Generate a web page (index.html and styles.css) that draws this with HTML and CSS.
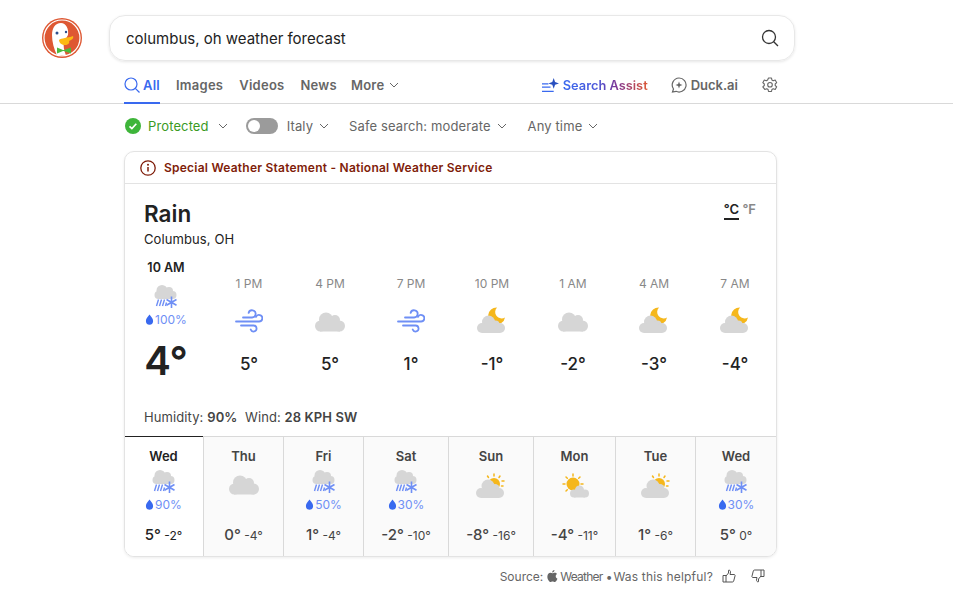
FILE: index.html
```html
<!DOCTYPE html>
<html lang="en">
<head>
    <meta charset="UTF-8">
    <meta name="viewport" content="width=device-width, initial-scale=1.0">
    <title>columbus, oh weather forecast at DuckDuckGo</title>
    <link rel="stylesheet" href="styles.css">
</head>
<body>
    <svg class="defs" width="0" height="0">
        <symbol id="cloud" viewBox="0 0 30 20">
            <g fill="#d6d6d6">
                <circle cx="11" cy="7.5" r="7"/>
                <circle cx="20" cy="8" r="5"/>
                <circle cx="5.5" cy="14" r="5.5"/>
                <circle cx="24.5" cy="14" r="5.5"/>
                <rect x="5" y="10" width="20" height="9.5"/>
            </g>
        </symbol>
        <symbol id="snow" viewBox="0 0 24 24">
            <g fill="#d6d6d6">
                <circle cx="8" cy="5.5" r="5.5"/>
                <circle cx="15" cy="6" r="4"/>
                <circle cx="4.5" cy="10" r="4"/>
                <circle cx="18.5" cy="10" r="4"/>
                <rect x="4" y="7" width="15" height="7"/>
            </g>
            <g stroke="#6f8ff5" stroke-width="1.4" fill="none">
                <path d="M2.500 21l2-6.500M5.500 21l2-6.500M8.500 21l2-6.500M11.500 21l1-3.500"/>
                <path d="M17.500 11.500v11.500M12.500 14.500l10 5.700M12.500 20.200l10-5.700" stroke-width="1.600"/>
            </g>
        </symbol>
        <symbol id="wind" viewBox="0 0 28 24">
            <g stroke="#6f8ff5" stroke-width="1.800" fill="none" stroke-linecap="round">
                <path d="M8 8.500h9a3.600 3.600 0 1 0-3.400-4.600"/>
                <path d="M1 12.500h23a3.300 3.300 0 1 0-3-4.600"/>
                <path d="M6 16.500h12.500a3 3 0 1 1-2.800 4"/>
            </g>
        </symbol>
        <symbol id="moon" viewBox="0 0 30 27">
            <path d="M20 0.500A8.500 8.500 0 1 0 28 10.500A6.450 6.450 0 0 1 20 0.500z" fill="#f5b71c"/>
            <g fill="#d6d6d6">
                <circle cx="11.500" cy="15" r="6.500"/>
                <circle cx="18.500" cy="17.500" r="4"/>
                <circle cx="5" cy="21" r="5"/>
                <circle cx="23" cy="21" r="5"/>
                <rect x="5" y="18" width="18" height="8"/>
            </g>
        </symbol>
        <symbol id="partly" viewBox="0 0 30 26">
            <g stroke="#f5b71c" stroke-width="1.500" stroke-linecap="round">
                <path d="M18 1v2M24 3l-1 1.500M11.500 3l1 1.500M28 8h-2M27 13h-1.500"/>
            </g>
            <circle cx="18" cy="11" r="6" fill="#f5b71c"/>
            <g fill="#d6d6d6">
                <circle cx="12" cy="13" r="6.500"/>
                <circle cx="19" cy="15.500" r="4.500"/>
                <circle cx="5" cy="20" r="5"/>
                <circle cx="23" cy="20" r="5"/>
                <rect x="5" y="16" width="18" height="9"/>
            </g>
        </symbol>
        <symbol id="sunny" viewBox="0 0 28 26">
            <g stroke="#f5b71c" stroke-width="1.500" stroke-linecap="round">
                <path d="M12 1v2M12 19v2M2 11h2M20 11h2M5 4l1.300 1.300M19 4l-1.300 1.300M5 18l1.300-1.300"/>
            </g>
            <circle cx="12" cy="11" r="6.500" fill="#f5b71c"/>
            <g fill="#d6d6d6">
                <circle cx="18.500" cy="17" r="4.500"/>
                <circle cx="13" cy="20.500" r="4"/>
                <circle cx="24" cy="20.500" r="4"/>
                <rect x="13" y="20" width="11" height="4.500"/>
            </g>
        </symbol>
        <symbol id="drop" viewBox="0 0 10 12">
            <path d="M5 0c2 2.800 4 4.700 4 7.200a4 4 0 0 1-8 0C1 4.700 3 2.800 5 0z" fill="#3969ef"/>
        </symbol>
        <symbol id="chev" viewBox="0 0 10 6">
            <path d="M1 1l4 4 4-4" fill="none" stroke="currentColor" stroke-width="1"/>
        </symbol>
    </svg>

    <header>
        <div class="top-row">
            <svg class="logo" viewBox="0 0 40 40" width="40" height="40">
                <circle cx="20" cy="20" r="20" fill="#de5833"/>
                <circle cx="20" cy="20" r="18" fill="none" stroke="#fff" stroke-width="1.200"/>
                <path d="M19 5C13 5 10 10 10 17C10 24 12 31 15 37.500L24 37.500C22 32 21 28 22 24L26 17C27 11 24 5 19 5z" fill="#fff"/>
                <circle cx="15" cy="15" r="1.500" fill="#2d4f8e"/>
                <circle cx="24" cy="14" r="1.200" fill="#2d4f8e"/>
                <path d="M17 22c2-2 9-2 14-4 1 2-1 4-4 5 1 2-1 4-4 4-3 0-6-2-6-5z" fill="#fdb913"/>
                <path d="M15 29.500l6 2.500h1l7-2.500v6l-7-2.500h-1l-6 2.500z" fill="#4cba3c"/>
            </svg>
            <form class="search-box">
                <span class="search-text">columbus, oh weather forecast</span>
                <svg viewBox="0 0 18 18" width="18" height="18">
                    <circle cx="8" cy="8" r="6.500" fill="none" stroke="#333" stroke-width="1.300"/>
                    <path d="M12.700 12.700L17 17" stroke="#333" stroke-width="1.300"/>
                </svg>
            </form>
        </div>
        <nav>
            <a href="#" class="tab active">
                <svg viewBox="0 0 16 16" width="16" height="16">
                    <circle cx="7" cy="7" r="6" fill="none" stroke="#3969ef" stroke-width="1.200"/>
                    <path d="M11.300 11.300L15.500 15.500" stroke="#3969ef" stroke-width="1.200"/>
                </svg>
                All
            </a>
            <a href="#" class="tab">Images</a>
            <a href="#" class="tab">Videos</a>
            <a href="#" class="tab news">News</a>
            <a href="#" class="tab">More <svg class="chev"><use href="#chev"/></svg></a>
            <div class="nav-right">
                <a href="#" class="assist">
                    <svg viewBox="0 0 16 14" width="17" height="15">
                        <path d="M0 5.500h6M0 8.500h8M0 12.500h11" stroke="#3969ef" stroke-width="1.100"/>
                        <path d="M11 0l1.300 3.700L16 5l-3.700 1.300L11 10 9.700 6.300 6 5l3.700-1.300z" fill="#2950bf"/>
                    </svg>
                    <span class="assist-text">Search Assist</span>
                </a>
                <a href="#" class="duck">
                    <svg viewBox="0 0 16 16" width="16" height="16">
                        <path d="M8 1a7 7 0 1 1-3 13.300L1.500 15l1-3A7 7 0 0 1 8 1z" fill="none" stroke="#666" stroke-width="1.200"/>
                        <path d="M8 4.500l.9 2.600 2.600.9-2.600.9L8 11.500l-.9-2.600L4.500 8l2.600-.9z" fill="#666"/>
                    </svg>
                    Duck.ai
                </a>
                <svg class="gear" viewBox="0 0 16 16" width="16" height="16">
                    <path d="M6.500 1h3l.4 2 1.300.8 2-.7 1.500 2.600-1.500 1.300v1.500l1.500 1.300-1.500 2.600-2-.7-1.300.8-.4 2h-3l-.4-2-1.300-.8-2 .7L.8 9.800l1.500-1.300V7L.8 5.700l1.500-2.600 2 .7 1.300-.8z" fill="none" stroke="#666" stroke-width="1.100" stroke-linejoin="round"/>
                    <circle cx="8" cy="7.750" r="2.300" fill="none" stroke="#666" stroke-width="1.100"/>
                </svg>
            </div>
        </nav>
    </header>

    <div class="filters">
        <div class="filter protected">
            <svg viewBox="0 0 16 16" width="16" height="16">
                <circle cx="8" cy="8" r="8" fill="#3eb53a"/>
                <path d="M4.500 8.300l2.400 2.300 4.400-4.800" fill="none" stroke="#fff" stroke-width="1.700"/>
            </svg>
            Protected <svg class="chev"><use href="#chev"/></svg>
        </div>
        <div class="filter region">
            <span class="toggle"><span class="knob"></span></span>
            Italy <svg class="chev"><use href="#chev"/></svg>
        </div>
        <div class="filter">Safe search: moderate <svg class="chev"><use href="#chev"/></svg></div>
        <div class="filter">Any time <svg class="chev"><use href="#chev"/></svg></div>
    </div>

    <main class="card">
        <div class="alert">
            <svg viewBox="0 0 16 16" width="16" height="16">
                <circle cx="8" cy="8" r="7.200" fill="none" stroke="#7f1d0a" stroke-width="1.300"/>
                <path d="M8 7v4.500" stroke="#7f1d0a" stroke-width="1.500"/>
                <circle cx="8" cy="4.800" r="1" fill="#7f1d0a"/>
            </svg>
            Special Weather Statement - National Weather Service
        </div>

        <section class="current">
            <div class="title-row">
                <div>
                    <h1>Rain</h1>
                    <p class="city">Columbus, OH</p>
                </div>
                <div class="units"><span class="unit-on">°C</span> <span class="unit-off">°F</span></div>
            </div>

            <div class="hours">
                <div class="hour now">
                    <div class="now-time">10 AM</div>
                    <svg class="ic-snow"><use href="#snow"/></svg>
                    <div class="rain-pct"><svg class="drop"><use href="#drop"/></svg>100%</div>
                    <div class="now-temp">4°</div>
                </div>
                <div class="hour">
                    <div class="time">1 PM</div>
                    <div class="ic-wrap"><svg class="ic-wind"><use href="#wind"/></svg></div>
                    <div class="temp">5°</div>
                </div>
                <div class="hour">
                    <div class="time">4 PM</div>
                    <div class="ic-wrap"><svg class="ic-cloud"><use href="#cloud"/></svg></div>
                    <div class="temp">5°</div>
                </div>
                <div class="hour">
                    <div class="time">7 PM</div>
                    <div class="ic-wrap"><svg class="ic-wind"><use href="#wind"/></svg></div>
                    <div class="temp">1°</div>
                </div>
                <div class="hour">
                    <div class="time">10 PM</div>
                    <div class="ic-wrap"><svg class="ic-moon"><use href="#moon"/></svg></div>
                    <div class="temp">-1°</div>
                </div>
                <div class="hour">
                    <div class="time">1 AM</div>
                    <div class="ic-wrap"><svg class="ic-cloud"><use href="#cloud"/></svg></div>
                    <div class="temp">-2°</div>
                </div>
                <div class="hour">
                    <div class="time">4 AM</div>
                    <div class="ic-wrap"><svg class="ic-moon"><use href="#moon"/></svg></div>
                    <div class="temp">-3°</div>
                </div>
                <div class="hour">
                    <div class="time">7 AM</div>
                    <div class="ic-wrap"><svg class="ic-moon"><use href="#moon"/></svg></div>
                    <div class="temp">-4°</div>
                </div>
            </div>

            <p class="details">Humidity: <b>90%</b> &nbsp;Wind: <b>28 KPH SW</b></p>
        </section>

        <section class="days">
            <div class="day active">
                <div class="day-name">Wed</div>
                <svg class="ic-snow"><use href="#snow"/></svg>
                <div class="rain-pct"><svg class="drop"><use href="#drop"/></svg>90%</div>
                <div class="range"><b>5°</b> <span>-2°</span></div>
            </div>
            <div class="day">
                <div class="day-name">Thu</div>
                <svg class="ic-cloud"><use href="#cloud"/></svg>
                <div class="range"><b>0°</b> <span>-4°</span></div>
            </div>
            <div class="day">
                <div class="day-name">Fri</div>
                <svg class="ic-snow"><use href="#snow"/></svg>
                <div class="rain-pct"><svg class="drop"><use href="#drop"/></svg>50%</div>
                <div class="range"><b>1°</b> <span>-4°</span></div>
            </div>
            <div class="day">
                <div class="day-name">Sat</div>
                <svg class="ic-snow"><use href="#snow"/></svg>
                <div class="rain-pct"><svg class="drop"><use href="#drop"/></svg>30%</div>
                <div class="range"><b>-2°</b> <span>-10°</span></div>
            </div>
            <div class="day">
                <div class="day-name">Sun</div>
                <svg class="ic-partly"><use href="#partly"/></svg>
                <div class="range"><b>-8°</b> <span>-16°</span></div>
            </div>
            <div class="day">
                <div class="day-name">Mon</div>
                <svg class="ic-partly"><use href="#sunny"/></svg>
                <div class="range"><b>-4°</b> <span>-11°</span></div>
            </div>
            <div class="day">
                <div class="day-name">Tue</div>
                <svg class="ic-partly"><use href="#partly"/></svg>
                <div class="range"><b>1°</b> <span>-6°</span></div>
            </div>
            <div class="day">
                <div class="day-name">Wed</div>
                <svg class="ic-snow"><use href="#snow"/></svg>
                <div class="rain-pct"><svg class="drop"><use href="#drop"/></svg>30%</div>
                <div class="range"><b>5°</b> <span>0°</span></div>
            </div>
        </section>
    </main>

    <footer class="source">
        <span>Source:</span>
        <svg viewBox="0 0 12 14" width="11" height="12">
            <path d="M8.300 0c.1 1.500-1.200 3-2.700 3C5.400 1.500 6.900.1 8.300 0zM6 3.800c.7 0 1.500-.6 2.700-.6 1 0 2 .5 2.600 1.400-2.300 1.300-1.900 4.600.5 5.500-.6 1.600-2 3.900-3.300 3.900-.9 0-1.300-.6-2.400-.6s-1.600.6-2.400.6C2.200 14 0 10.800 0 7.800 0 5 1.800 3.300 3.600 3.300c1 0 1.800.5 2.400.5z" fill="#666"/>
        </svg>
        <span class="weather-name">Weather</span>
        <span>•</span>
        <span class="helpful">Was this helpful?</span>
        <svg class="thumb" viewBox="0 0 14 14" width="14" height="14">
            <path d="M1 6.500h3v6.500H1zM4 7l2.500-3V1.300c1.300-.5 2 .7 2 1.700L8 5.500h4c1 0 1.300.8 1 1.500l-1.300 5c-.2.700-.7 1-1.300 1H4" fill="none" stroke="#555" stroke-width="1"/>
        </svg>
        <svg class="thumb down" viewBox="0 0 14 14" width="14" height="14">
            <path d="M13 7.500h-3V1h3zM10 7l-2.500 3v2.700c-1.300.5-2-.7-2-1.700L6 8.500H2c-1 0-1.300-.8-1-1.500l1.300-5c.2-.7.7-1 1.300-1H10" fill="none" stroke="#555" stroke-width="1"/>
        </svg>
    </footer>
</body>
</html>
```

FILE: styles.css
```css
body {
    margin: 0;
    font-family: Inter, "Noto Sans", sans-serif;
    background-color: #fff;
    color: #222;
}
.defs {
    position: absolute;
}
svg {
    flex-shrink: 0;
}
header {
    border-bottom: 1px solid #d9d9d9;
    height: 104px;
    box-sizing: border-box;
}
.top-row {
    display: flex;
    align-items: flex-start;
    padding-top: 15px;
    padding-left: 42px;
}
.logo {
    margin-top: 3px;
    margin-right: 27px;
}
.search-box {
    display: flex;
    align-items: center;
    justify-content: space-between;
    width: 686px;
    height: 46px;
    box-sizing: border-box;
    padding: 0 15px 0 16px;
    margin: 0;
    border: 1px solid #e8e8e8;
    border-radius: 16px;
    box-shadow: 0 1px 3px rgba(0, 0, 0, 0.1);
}
.search-text {
    font-size: 15px;
    color: #222;
}
nav {
    display: flex;
    width: 654px;
    height: 43px;
    margin-left: 124px;
    font-size: 13px;
    font-weight: 600;
}
nav a {
    color: #666;
    text-decoration: none;
}
.tab {
    display: flex;
    align-items: center;
    gap: 3px;
    height: 100%;
    margin-right: 16px;
    box-sizing: border-box;
    padding-top: 5px;
    letter-spacing: 0.25px;
}
.tab.news {
    margin-right: 14px;
}
.tab.active {
    color: #3969ef;
    border-bottom: 2px solid #3969ef;
    padding-top: 7px;
}
.chev {
    width: 10px;
    height: 6px;
    margin-left: 2px;
}
.nav-right {
    display: flex;
    align-items: center;
    margin-left: auto;
    padding-top: 5px;
}
.assist {
    display: flex;
    align-items: center;
    gap: 4px;
    margin-right: 23px;
    font-size: 12.8px;
}
.assist-text {
    background: linear-gradient(to right, #3969ef 0%, #4a55d8 40%, #83368f 65%, #de5833 100%);
    -webkit-background-clip: text;
    background-clip: text;
    color: transparent;
}
.duck {
    display: flex;
    align-items: center;
    gap: 4px;
    margin-right: 24px;
}
.filters {
    display: flex;
    align-items: center;
    height: 44px;
    margin-left: 125px;
    font-size: 13px;
    letter-spacing: 0.12px;
    color: #666;
}
.filter {
    display: flex;
    align-items: center;
    gap: 4px;
    margin-right: 21px;
}
.protected {
    color: #3a9a1f;
    gap: 7px;
    margin-right: 18px;
}
.protected .chev {
    color: #666;
}
.region {
    margin-right: 20px;
}
.toggle {
    display: block;
    width: 32px;
    height: 16px;
    border-radius: 8px;
    background-color: #9b9b9b;
    margin-right: 5px;
}
.knob {
    display: block;
    width: 12px;
    height: 12px;
    margin: 2px;
    border-radius: 50%;
    background-color: #fff;
}
.card {
    width: 653px;
    height: 406px;
    box-sizing: border-box;
    margin-left: 124px;
    margin-top: 3px;
    border: 1px solid #e3e3e3;
    border-radius: 10px;
    box-shadow: 0 1px 3px rgba(0, 0, 0, 0.08);
    overflow: hidden;
}
.alert {
    display: flex;
    align-items: center;
    gap: 8px;
    height: 32px;
    box-sizing: border-box;
    padding-left: 15px;
    border-bottom: 1px solid #e3e3e3;
    font-size: 12px;
    letter-spacing: 0.23px;
    font-weight: 600;
    color: #7f1d0a;
}
.current {
    height: 252px;
    padding-left: 19px;
    box-sizing: border-box;
}
.title-row {
    display: flex;
    justify-content: space-between;
    height: 75px;
    padding-top: 16px;
    box-sizing: border-box;
}
h1 {
    margin: 0;
    font-size: 22.5px;
    font-weight: 600;
    line-height: 27px;
    color: #222;
}
.city {
    margin: 3px 0 0;
    font-size: 13px;
    letter-spacing: 0.1px;
    line-height: 18px;
}
.units {
    margin-right: 20px;
    font-size: 13px;
    font-weight: 600;
    height: 20px;
    padding-top: 1px;
}
.unit-on {
    display: inline-block;
    border-bottom: 2px solid #222;
    padding: 0 0 1px;
}
.unit-off {
    color: #888;
}
.hours {
    display: flex;
    height: 150px;
}
.hour {
    display: flex;
    flex-direction: column;
    align-items: center;
    width: 81px;
    padding-top: 17px;
    box-sizing: border-box;
}
.hour.now {
    width: 64px;
    align-items: flex-start;
    padding-top: 1px;
    margin-right: 0.5px;
}
.now-time {
    width: 44px;
    text-align: center;
    font-size: 12.5px;
    font-weight: 600;
    line-height: 16px;
}
.now .ic-snow {
    margin: 9px 0 0 10px;
}
.now .rain-pct {
    width: 44px;
    justify-content: center;
    margin-top: 4px;
}
.now-temp {
    width: 44px;
    text-align: center;
    font-size: 40px;
    font-weight: 600;
    line-height: 48px;
    margin-top: 10px;
}
.time {
    font-size: 12px;
    line-height: 16px;
    color: #888;
}
.ic-wrap {
    display: flex;
    align-items: flex-end;
    justify-content: center;
    height: 35px;
    margin-top: 7px;
}
.ic-wind {
    width: 28px;
    height: 24px;
    margin-bottom: 1px;
}
.ic-cloud {
    width: 30px;
    height: 20px;
    margin-bottom: 2px;
}
.ic-moon {
    width: 30px;
    height: 27px;
}
.ic-snow {
    display: block;
    width: 24px;
    height: 24px;
}
.ic-partly {
    width: 30px;
    height: 26px;
}
.rain-pct {
    display: flex;
    align-items: center;
    font-size: 12px;
    line-height: 14px;
    color: #6f8ff5;
}
.drop {
    width: 9px;
    height: 12px;
    margin-right: 1px;
}
.temp {
    font-size: 17px;
    font-weight: 500;
    line-height: 20px;
    margin-top: 20px;
}
.details {
    margin: 0;
    font-size: 13px;
    letter-spacing: 0.1px;
    line-height: 16px;
    color: #444;
}
.details b {
    font-weight: 600;
}
.days {
    display: grid;
    grid-template-columns: 78px 80px 80px 85px 85px 82px 80px 1fr;
    height: 120px;
    border-top: 1px solid #d9d9d9;
}
.day {
    display: flex;
    flex-direction: column;
    align-items: center;
    padding-top: 11px;
    box-sizing: border-box;
    border-left: 1px solid #d9d9d9;
    background-color: #fafafa;
    color: #444;
}
.day.active {
    border-left: none;
    border-top: 1px solid #222;
    margin-top: -1px;
    padding-right: 1px;
    background-color: #fff;
    color: #222;
}
.day-name {
    font-size: 13px;
    font-weight: 600;
    line-height: 16px;
    height: 18px;
}
.day .ic-snow {
    margin-top: 4px;
}
.day .ic-cloud {
    margin-top: 9px;
    margin-bottom: 0;
}
.day .ic-partly {
    margin-top: 7px;
}
.day .rain-pct {
    margin-top: 4px;
}
.range {
    margin-top: auto;
    margin-bottom: 13px;
    font-size: 12px;
    white-space: nowrap;
}
.range b {
    font-size: 15px;
    font-weight: 500;
}
.source {
    display: flex;
    align-items: center;
    justify-content: flex-end;
    width: 641px;
    margin-left: 124px;
    height: 38px;
    font-size: 12px;
    color: #666;
}
.source svg:first-of-type {
    margin: 0 2px 0 4px;
}
.weather-name {
    letter-spacing: -0.75px;
    margin-right: 3px;
}
.helpful {
    letter-spacing: 0.2px;
    margin-left: 1px;
}
.thumb {
    margin-left: 9px;
}
.thumb.down {
    margin-left: 15px;
}
```
